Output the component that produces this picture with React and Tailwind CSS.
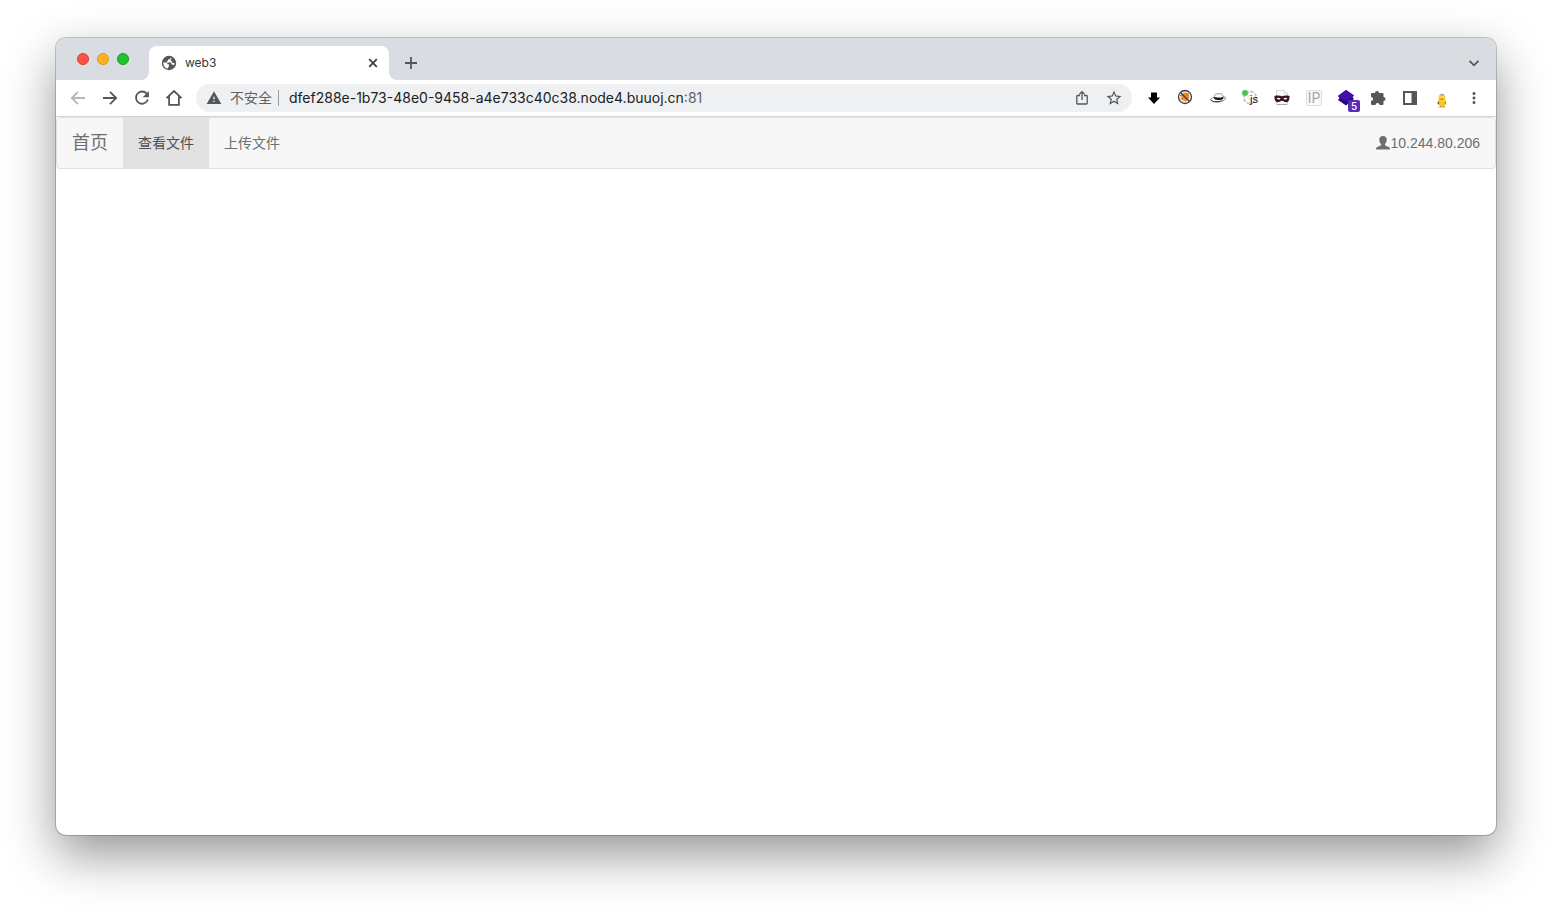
import { MdWarning, MdMoreVert, MdStarBorder } from 'react-icons/md';

const lights = [
  { name: '关闭窗口', color: 'bg-[#ff5149] border-[#e0382f]' },
  { name: '最小化', color: 'bg-[#ffb224] border-[#df951a]' },
  { name: '缩放', color: 'bg-[#23c02f] border-[#12a01e]' },
];

function IconButton({ label, className = '', children }) {
  return (
    <button
      type="button"
      aria-label={label}
      className={`flex h-7 w-8 shrink-0 items-center justify-center text-[#53575b] ${className}`}
    >
      {children}
    </button>
  );
}

function LineIcon({ d, children }) {
  return (
    <svg viewBox="0 0 16 16" className="h-4 w-4" fill="none" stroke="currentColor" strokeWidth="1.800" aria-hidden="true">
      <path d={d} />
      {children}
    </svg>
  );
}

function GlobeIcon() {
  return (
    <svg viewBox="0 0 16 16" className="h-4 w-4 shrink-0" aria-hidden="true">
      <circle cx="8" cy="8" r="7.2" fill="#53575b" />
      <path
        d="M9.400 2.400c.2 1.200-.3 1.900-1.500 1.900-.6 0-1 .3-1 .9 0 .8-.4 1.100-1.200 1.100v1.200h3.500c.8 0 1.200.4 1.200 1.200v.8h1c.7 0 1.100.4 1.200 1.100.7-.9 1-1.800 1-2.700h-1.500c-.9 0-1.400-.4-1.400-1.300V5.800h-.9V4.500c0-.6.4-.9 1-.9-.4-.5-.8-.9-1.400-1.200z"
        fill="#fff"
      />
      <path d="M2.200 7.400h2.400c1.400 0 2 .6 2 1.900h1.300v2c0 .7-.3 1.100-1 1.100v1.200C4.300 13.200 2.200 10.800 2.200 7.400z" fill="#fff" />
    </svg>
  );
}

function HomeIcon() {
  return (
    <svg viewBox="0 0 18 18" className="h-[18px] w-[18px]" fill="none" stroke="currentColor" strokeWidth="1.8" aria-hidden="true">
      <path d="M1.500 9.200 9 2l7.500 7.200M4.100 7.500v8.300h9.800V7.500" />
    </svg>
  );
}

function ShareIcon() {
  return (
    <svg viewBox="0 0 16 16" className="h-4 w-4" fill="none" stroke="currentColor" strokeWidth="1.300" aria-hidden="true">
      <path d="M6 5.500H3.500q-.7 0-.7.700v7.100q0 .7.700.7h9q.7 0 .7-.7V6.200q0-.7-.7-.7H10M8 10V1.800M5.400 4.200 8 1.600l2.600 2.600" />
    </svg>
  );
}

function DownIcon() {
  return (
    <svg viewBox="0 0 16 16" className="h-4 w-4" aria-hidden="true">
      <path d="M5 2.500h6v5h3L8 14 2 7.500h3z" fill="#000" />
    </svg>
  );
}

function BlockedIcon() {
  return (
    <svg viewBox="0 0 16 16" className="mb-0.5 mr-0.5 h-4 w-4" aria-hidden="true">
      <circle cx="8" cy="8" r="6.500" fill="#f4ead9" stroke="#39424a" strokeWidth="1.300" />
      <path d="M4 5.500 8 3.500l4 1v5l-3 3-4-1.500z" fill="#f28b2a" />
      <path d="M3 6.500h3M3.500 9.500h3M9 5l2.500 2M8.500 8.500l2 2" stroke="#c9691c" strokeWidth=".8" />
      <path d="M3.300 3.300l9.400 9.400" stroke="#39424a" strokeWidth="1.300" />
    </svg>
  );
}

function HatIcon() {
  return (
    <svg viewBox="0 0 16 16" className="h-4 w-4" aria-hidden="true">
      <path d="M.4 9.300C1.500 7.800 4 7.500 5 7.400l9-.4c2-.2 2 1.600.5 2.800C11 12.900 2 13.200.4 9.300z" fill="#fff" stroke="#333" strokeWidth=".6" />
      <path d="M4.200 8c0-2.600.6-4.200 2.200-4.100 1.700.1 2.900-.5 4.700-.2 1.700.3 2 2.200 2.100 4.300z" fill="#fafafa" stroke="#444" strokeWidth=".5" />
      <path d="M4.200 7.100c2.600 1 6.300.9 8.900-.2l.1 2c-2.600 1.500-6.700 1.500-9 .2z" fill="#111" />
      <path d="M.5 9.600c1.500 2.300 8.500 2.300 12 .2-1.500 2.600-10.500 3.600-12-.2z" fill="#111" />
    </svg>
  );
}

function JsIcon() {
  return (
    <svg viewBox="0 0 18 18" className="h-[18px] w-[18px]" aria-hidden="true">
      <circle cx="9" cy="8.500" r="6" fill="none" stroke="#c4c4c4" strokeWidth="2.200" strokeDasharray="2.700 2" />
      <circle cx="9" cy="8.500" r="5.500" fill="#fff" stroke="#c4c4c4" strokeWidth=".6" />
      <circle cx="9" cy="8.500" r="2.200" fill="#fff" stroke="#d0d0d0" strokeWidth=".6" />
      <circle cx="4" cy="4" r="3" fill="#4fbd5d" stroke="#8fd099" strokeWidth=".7" />
      <text x="9" y="14" fontSize="11" fontFamily="Liberation Sans, sans-serif" fill="#111">js</text>
    </svg>
  );
}

function MaskIcon() {
  return (
    <svg viewBox="0 0 16 16" className="h-4 w-4" aria-hidden="true">
      <path d="M2.500.5h8l3 3v11h-11z" fill="#fafafa" stroke="#d8d8d8" />
      <path d="M10.500.5v3h3" fill="#eee" stroke="#d0d0d0" strokeWidth=".7" />
      <path d="M.5 6c2-.7 5.500-.6 7.500.2 2-.8 5.500-.9 7.500-.2.1 3-.4 6-3 6.300-2 .2-3-1.600-4.500-1.600s-2.500 1.800-4.500 1.600C.9 12 .4 9 .5 6z" fill="#3a1519" />
      <path d="M2.600 8.500q2-1.700 4 .2-2 1.800-4-.2zm6.800.2q2-1.900 4-.2-2 2-4 .2z" fill="#fff" />
      <path d="M3 14.500h10" stroke="#aaa" />
    </svg>
  );
}

function BoxIcon() {
  return (
    <svg viewBox="0 0 16 16" className="h-4 w-4" aria-hidden="true">
      <path d="M8 0l8 5.500-1.500 1.500L16 9l-8 6.500L0 10l1.500-2L0 6z" fill="#280a80" />
      <path d="M8 0l8 5.500-8 6L0 6z" fill="#4210ae" />
    </svg>
  );
}

function PuzzleIcon() {
  return (
    <svg viewBox="0 0 16 16" className="h-4 w-4" aria-hidden="true">
      <path
        d="M5 3a2 2 0 0 1 4 0h3.200c.8 0 1.300.5 1.300 1.300V7a2 2 0 0 1 0 4v2.700c0 .8-.5 1.300-1.300 1.300H9.500a2 2 0 0 0-4 0H2.300C1.500 15 1 14.500 1 13.700V11a2 2 0 0 0 0-4V4.300C1 3.500 1.500 3 2.300 3z"
        fill="currentColor"
      />
    </svg>
  );
}

function PanelIcon() {
  return (
    <svg viewBox="0 0 14 14" className="h-3.5 w-3.5" aria-hidden="true">
      <path d="M0 0h14v14H0zM2 2v10h6.500V2z" fill="currentColor" fillRule="evenodd" />
    </svg>
  );
}

function DuckIcon() {
  return (
    <svg viewBox="0 0 16 16" className="mt-1.5 h-4 w-4" aria-hidden="true">
      <ellipse cx="8" cy="14.200" rx="4.500" ry=".7" fill="#d8d8d8" />
      <path d="M5.500 14l1-2h1.200v2zm3.200 0v-2h1.200l.9 2z" fill="#c98212" />
      <ellipse cx="8" cy="9.500" rx="4.200" ry="3.700" fill="#f6c62d" />
      <circle cx="8" cy="4.700" r="3.600" fill="#fbd443" />
      <path d="M5.400 2.300a3.600 3.600 0 0 1 5.200-.2l-1.700.7z" fill="#a5aaa5" />
      <path d="M5 5.800l4-.3 2 .6-2.500 1-3-.3z" fill="#d98d17" />
      <path d="M4.300 8.300c-.9 1.200-.9 2.500 0 3.300l1-1.500z" fill="#6e4e1a" />
      <path d="M11.600 8.300c.9 1.200.9 2.500 0 3.300l-1-1.500z" fill="#bf8418" />
    </svg>
  );
}

function UserIcon() {
  return (
    <svg viewBox="0 0 14 14" className="h-3.5 w-3.5" aria-hidden="true">
      <path
        d="M7 0c2.300 0 3.700 1.300 3.700 3.700 0 1.700-.8 3.400-1.700 4.200v.9c0 .5.3.8.8 1l3 1.300c.8.4 1.200.9 1.200 1.700v.7H0v-.7c0-.8.4-1.300 1.200-1.700l3-1.300c.5-.2.800-.5.800-1v-.9C4.100 7.100 3.300 5.400 3.300 3.700 3.300 1.300 4.700 0 7 0z"
        fill="currentColor"
      />
    </svg>
  );
}

function TabStrip() {
  return (
    <div className="flex h-[42px] bg-[#d9dce1] pl-[21px] pr-1.5">
      <div className="mr-5 flex items-center gap-2">
        {lights.map((light) => (
          <button
            key={light.name}
            type="button"
            aria-label={light.name}
            className={`h-3 w-3 rounded-full border ${light.color}`}
          />
        ))}
      </div>
      <div className="relative mt-2 flex w-60 items-center rounded-t-lg bg-white pl-3 pr-2">
        <svg viewBox="0 0 8 8" className="absolute -left-2 bottom-0 h-2 w-2" aria-hidden="true">
          <path d="M8 0v8H0a8 8 0 0 0 8-8z" fill="#fff" />
        </svg>
        <svg viewBox="0 0 8 8" className="absolute -right-2 bottom-0 h-2 w-2" aria-hidden="true">
          <path d="M0 0v8h8a8 8 0 0 1-8-8z" fill="#fff" />
        </svg>
        <GlobeIcon />
        <span className="ml-2 flex-1 truncate text-xs text-[#35383b]">web3</span>
        <button type="button" aria-label="关闭标签页" className="flex h-4 w-4 items-center justify-center text-[#3c4043]">
          <LineIcon d="M4.200 4.200l7.600 7.600M11.800 4.200l-7.600 7.600" />
        </button>
      </div>
      <div className="mt-2 flex flex-1 items-center justify-between pl-1.5">
        <IconButton label="新标签页" className="text-[#35383b]">
          <LineIcon d="M8 2v12M2 8h12" />
        </IconButton>
        <IconButton label="搜索标签页" className="text-[#35383b]">
          <LineIcon d="M3.500 5.800 8 10.300l4.500-4.500" />
        </IconButton>
      </div>
    </div>
  );
}

function Toolbar() {
  return (
    <div className="flex h-[37px] items-center border-b border-[#d2d3d5] bg-white px-1.5">
      <IconButton label="后退" className="text-[#b5b7b9]"><LineIcon d="M15 8H2.500M8 1.800 1.800 8 8 14.200" /></IconButton>
      <IconButton label="前进"><LineIcon d="M1 8h12.500M8 1.800 14.200 8 8 14.200" /></IconButton>
      <IconButton label="重新加载">
        <LineIcon d="M12.700 3.600A6.100 6.100 0 1 0 13.900 9.500">
          <path d="M14.900 1v6.200H8.700z" fill="currentColor" stroke="none" />
        </LineIcon>
      </IconButton>
      <IconButton label="主页"><HomeIcon /></IconButton>

      <div className="mx-1.5 flex h-7 min-w-0 flex-1 items-center rounded-full bg-[#eff0f2] pl-2.5 pr-0.5">
        <button type="button" className="flex shrink-0 items-center gap-2 text-sm text-[#5f6368]">
          <MdWarning className="h-4 w-4 text-[#53575b]" />
          不安全
        </button>
        <span className="ml-1.5 mr-2.5 h-4 w-px shrink-0 bg-[#9b9da0]" />
        <input
          type="text"
          aria-label="地址栏"
          defaultValue="dfef288e-1b73-48e0-9458-a4e733c40c38.node4.buuoj.cn"
          className="min-w-0 field-sizing-content bg-transparent text-sm text-[#202124] outline-none"
        />
        <span className="flex-1 text-sm text-[#5f6368]">:81</span>
        <IconButton label="分享"><ShareIcon /></IconButton>
        <IconButton label="添加书签"><MdStarBorder className="h-[18px] w-[18px]" /></IconButton>
      </div>

      <IconButton label="下载"><DownIcon /></IconButton>
      <IconButton label="代理"><BlockedIcon /></IconButton>
      <IconButton label="帽子"><HatIcon /></IconButton>
      <IconButton label="JS 开关"><JsIcon /></IconButton>
      <IconButton label="伪装"><MaskIcon /></IconButton>
      <IconButton label="IP 信息">
        <span className="flex h-4 w-4 items-center justify-center rounded-xs border border-[#dedede] bg-[#fafafa] text-sm text-[#a5a5a5]">IP</span>
      </IconButton>
      <IconButton label="技术分析" className="relative">
        <BoxIcon />
        <span className="absolute bottom-0 right-0.5 flex h-3 w-3 items-center justify-center rounded-xs bg-[#5b2bb5] text-[10px] font-medium text-white">5</span>
      </IconButton>
      <IconButton label="扩展程序"><PuzzleIcon /></IconButton>
      <IconButton label="侧边栏"><PanelIcon /></IconButton>
      <IconButton label="个人资料"><DuckIcon /></IconButton>
      <IconButton label="更多"><MdMoreVert className="h-[18px] w-[18px]" /></IconButton>
    </div>
  );
}

function Navbar() {
  return (
    <nav className="flex h-[52px] rounded border border-[#e2e2e2] bg-[#f7f7f7] font-['Liberation_Sans','Noto_Sans_CJK_SC',sans-serif] text-sm text-[#6e6e6e]">
      <a href="#home" className="flex items-center px-[15px] text-lg">首页</a>
      <a href="#files" className="flex items-center bg-[#e2e2e2] px-[15px] text-[#4f4f4f]">查看文件</a>
      <a href="#upload" className="flex items-center px-[15px]">上传文件</a>
      <a href="#user" className="ml-auto flex items-center px-[15px]">
        <UserIcon />
        10.244.80.206
      </a>
    </nav>
  );
}

export default function App() {
  return (
    <div className="flex min-h-screen bg-white px-14 pb-[74px] pt-[38px] font-['Inter','Noto_Sans_CJK_SC',sans-serif]">
      <div className="flex min-w-0 flex-1 flex-col overflow-hidden rounded-[10px] bg-white shadow-[0_0_0_1px_rgba(0,0,0,0.2),0_20px_50px_rgba(0,0,0,0.42)]">
        <TabStrip />
        <Toolbar />
        <Navbar />
        <main className="flex-1" />
      </div>
    </div>
  );
}
